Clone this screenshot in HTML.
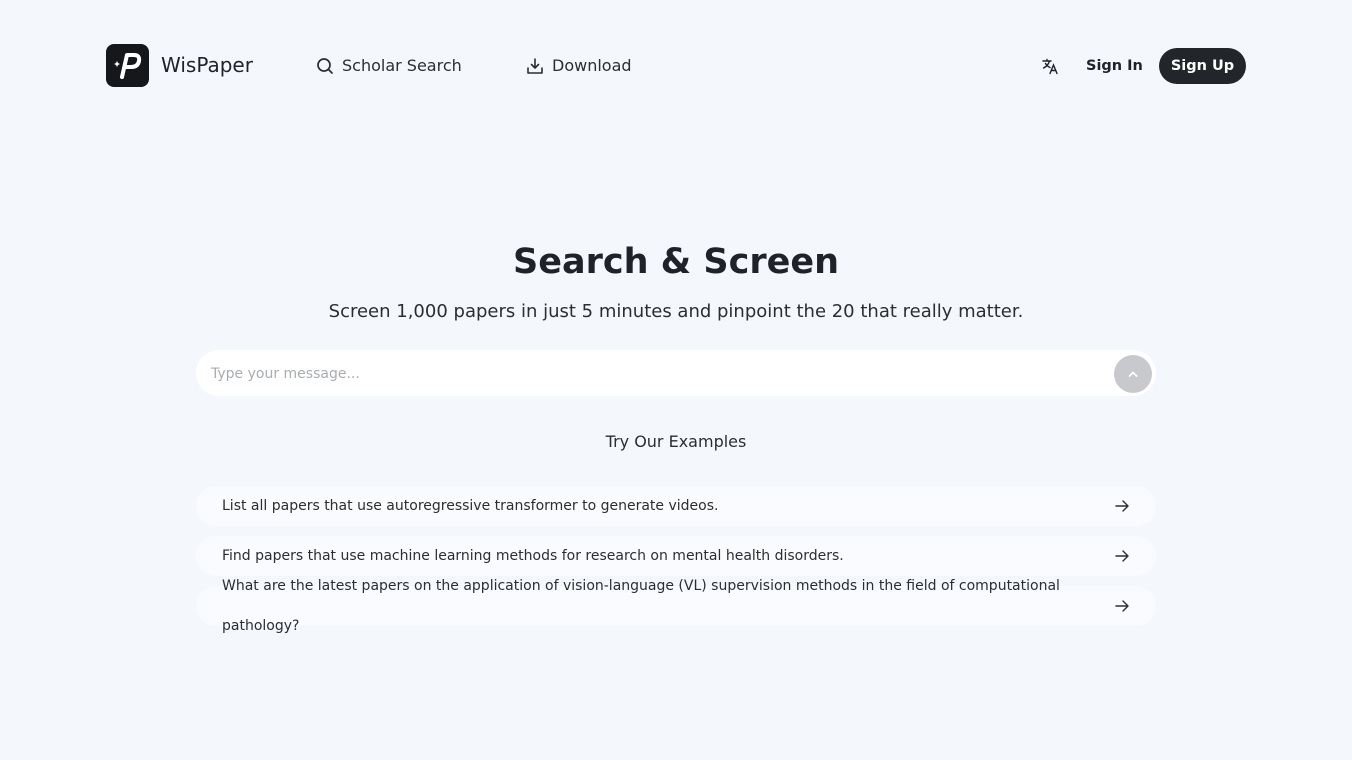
<!DOCTYPE html>
<html><head><meta charset="utf-8"><style>
*{box-sizing:border-box;margin:0;padding:0}
body{width:1352px;height:760px;background:#f4f8fd;font-family:"DejaVu Sans","Liberation Sans",sans-serif;color:#1f2329;position:relative;overflow:hidden}
.abs{position:absolute}
.logo{left:106px;top:44px;width:43px;height:43px;background:#15171a;border-radius:8px}
.brand{left:161px;top:53px;font-size:20px;color:#1f2329}
.nav{top:56px;font-size:16px;color:#2a2e33;display:flex;align-items:center;gap:8px}
.signin{left:1086px;top:58px;font-size:14.5px;font-weight:bold}
.signup{left:1159px;top:48px;width:87px;height:36px;border-radius:18px;background:#22252a;color:#fff;font-size:14.5px;font-weight:bold;display:flex;align-items:center;justify-content:center}
h1{position:absolute;top:242px;width:100%;text-align:center;font-size:35px;font-weight:bold;color:#1f2329}
.sub{top:301px;width:100%;text-align:center;font-size:18px;color:#2a2e33}
.input{left:196px;top:350px;width:960px;height:46px;border-radius:23px;background:#fff}
.ph{left:211px;top:366px;font-size:14px;color:#a9adb2}
.send{left:1114px;top:355px;width:38px;height:38px;border-radius:50%;background:#c7c9cc;display:flex;align-items:center;justify-content:center}
.try{top:432px;width:100%;text-align:center;font-size:16px;color:#2a2e33}
.ex{left:196px;width:960px;height:40px;border-radius:20px;background:#f9fbfe}
.et{left:222px;font-size:14px;color:#2a2e33}
.arr{left:1114px}
</style></head><body>
<div class="abs logo"><svg width="43" height="43" viewBox="0 0 43 43"><path d="M16 33 L21 11 H28 Q34 11 33 17 Q32 23 25 23 H19" fill="none" stroke="#fff" stroke-width="4" stroke-linejoin="round" stroke-linecap="round"/><path d="M11 17 l1 2 2 1 -2 1 -1 2 -1 -2 -2 -1 2 -1z" fill="#fff"/></svg></div>
<div class="abs brand">WisPaper</div>
<div class="abs nav" style="left:316px"><svg width="18" height="18" viewBox="0 0 18 18"><circle cx="8" cy="8" r="6" fill="none" stroke="#2a2e33" stroke-width="1.7"/><path d="M12.5 12.5 L16 16" stroke="#2a2e33" stroke-width="1.7" stroke-linecap="round"/></svg>Scholar Search</div>
<div class="abs nav" style="left:526px"><svg width="18" height="18" viewBox="0 0 18 18" fill="none" stroke="#2a2e33" stroke-width="1.6" stroke-linecap="round" stroke-linejoin="round"><path d="M9 2 V11 M5.5 7.5 L9 11 12.5 7.5 M2 11 V16 H16 V11"/></svg>Download</div>
<div class="abs" style="left:1042px;top:58px"><svg width="17" height="17" viewBox="0 0 17 17" fill="none" stroke="#1f2329" stroke-width="1.4" stroke-linecap="round"><path d="M1 3 H9 M5 1.5 V3 M7.5 3 Q6 8 1.5 10 M3.5 5.5 Q5 8 8 9.5 M8 15.5 L11.5 7 15 15.5 M9.3 12.5 H13.7"/></svg></div>
<div class="abs signin">Sign In</div>
<div class="abs signup">Sign Up</div>
<h1>Search &amp; Screen</h1>
<div class="abs sub">Screen 1,000 papers in just 5 minutes and pinpoint the 20 that really matter.</div>
<div class="abs input"></div>
<div class="abs ph">Type your message...</div>
<div class="abs send"><svg width="14" height="14" viewBox="0 0 14 14"><path d="M3.5 9 L7 5.5 10.5 9" fill="none" stroke="#fff" stroke-width="1.8" stroke-linecap="round" stroke-linejoin="round"/></svg></div>
<div class="abs try">Try Our Examples</div>
<div class="abs ex" style="top:486px"></div>
<div class="abs ex" style="top:536px"></div>
<div class="abs ex" style="top:586px"></div>
<div class="abs et" style="top:498px">List all papers that use autoregressive transformer to generate videos.</div>
<div class="abs et" style="top:548px">Find papers that use machine learning methods for research on mental health disorders.</div>
<div class="abs et" style="top:578px">What are the latest papers on the application of vision-language (VL) supervision methods in the field of computational</div>
<div class="abs et" style="top:618px">pathology?</div>
<svg class="abs arr" style="top:498px" width="16" height="16" viewBox="0 0 16 16"><path d="M2 8 H14 M9 3 L14 8 9 13" fill="none" stroke="#2a2e33" stroke-width="1.4" stroke-linecap="round" stroke-linejoin="round"/></svg>
<svg class="abs arr" style="top:548px" width="16" height="16" viewBox="0 0 16 16"><path d="M2 8 H14 M9 3 L14 8 9 13" fill="none" stroke="#2a2e33" stroke-width="1.4" stroke-linecap="round" stroke-linejoin="round"/></svg>
<svg class="abs arr" style="top:598px" width="16" height="16" viewBox="0 0 16 16"><path d="M2 8 H14 M9 3 L14 8 9 13" fill="none" stroke="#2a2e33" stroke-width="1.4" stroke-linecap="round" stroke-linejoin="round"/></svg>
</body></html>
